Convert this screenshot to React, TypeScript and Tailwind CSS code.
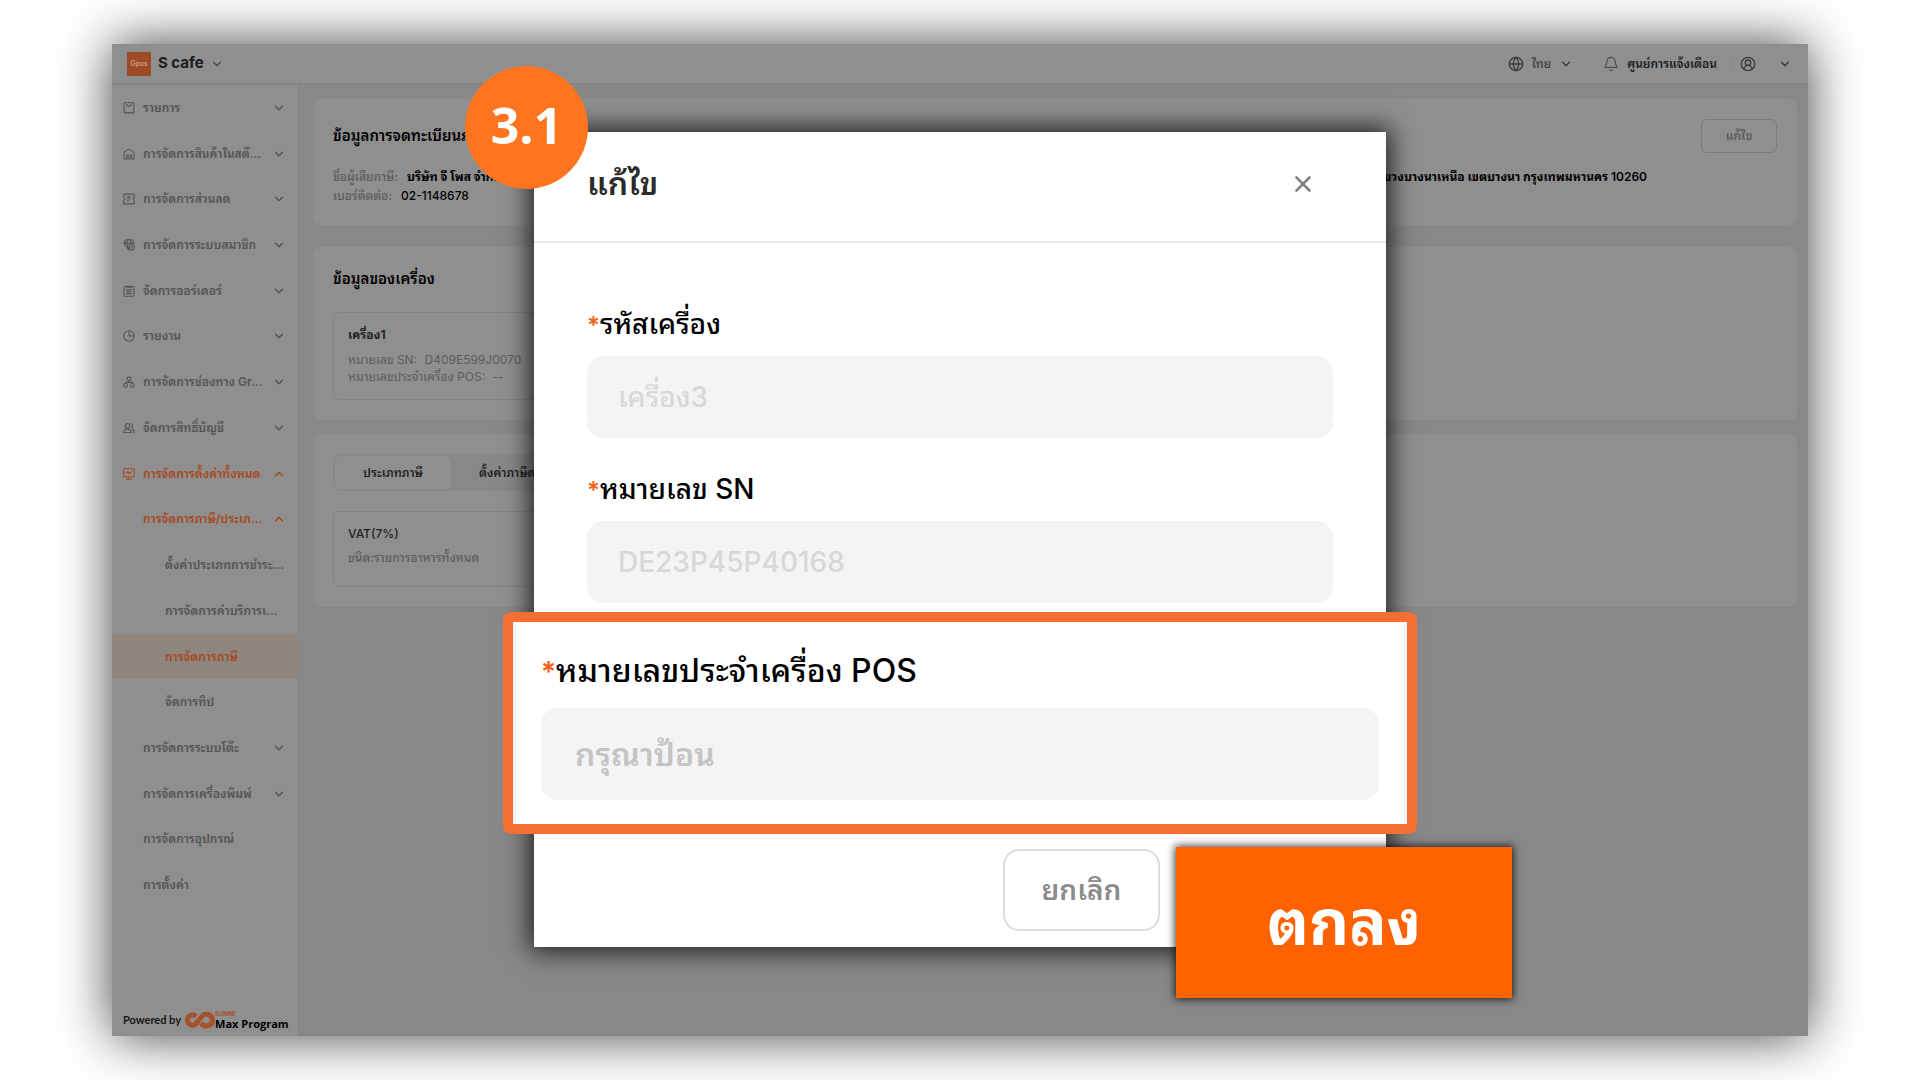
import { ReactNode } from 'react';
import { Bell, ChevronDown, ChevronUp, CircleUserRound, Globe, X } from 'lucide-react';
import { clsx } from 'clsx';

interface NavItem {
  title: string;
  icon?: ReactNode;
  level: 1 | 2 | 3;
  arrow?: 'up' | 'down';
  active?: boolean;
  current?: boolean;
}

function NavIcon({ children }: { children: ReactNode }) {
  return (
    <svg
      viewBox="0 0 16 16"
      className="w-3 h-3 shrink-0"
      fill="none"
      stroke="currentColor"
      strokeWidth="1.4"
      strokeLinejoin="round"
    >
      {children}
    </svg>
  );
}

const navigation: NavItem[] = [
  {
    title: 'รายการ',
    level: 1,
    arrow: 'down',
    icon: <NavIcon><rect x="1.5" y="1" width="13" height="13.5" rx="1" /><path d="M5 2.5a3 3 0 0 0 6 0" /></NavIcon>,
  },
  {
    title: 'การจัดการสินค้าในสต๊...',
    level: 1,
    arrow: 'down',
    icon: <NavIcon><path d="M1.5 14.5V5.5L8 1.5l6.5 4v9zM4 12h8M4.5 9.5h2.5v2M9 9.5h2.5v2" /></NavIcon>,
  },
  {
    title: 'การจัดการส่วนลด',
    level: 1,
    arrow: 'down',
    icon: <NavIcon><path d="M1 1.5h14v4l-1.5 2.5 1.5 2.5v4H1v-4L2.5 8 1 5.5zM5.5 5.5h5M5.5 8h4M5.5 10.5h2.5" /></NavIcon>,
  },
  {
    title: 'การจัดการระบบสมาชิก',
    level: 1,
    arrow: 'down',
    icon: <NavIcon><path d="M8 15L1 5.5L4 1h8l3 4.5M1 5.5h14M5 5.5L8 15M5 5.5L6.5 1M10.5 5.5L9.5 1" /><circle cx="11.5" cy="11" r="3.5" /><path d="M10 11l1 1 2-2" /></NavIcon>,
  },
  {
    title: 'จัดการออร์เดอร์',
    level: 1,
    arrow: 'down',
    icon: <NavIcon><rect x="1.5" y="2" width="13" height="13" rx="1" /><path d="M5 1v2h6V1M4.5 6.5h7M4.5 9h7M4.5 11.5h7" /></NavIcon>,
  },
  {
    title: 'รายงาน',
    level: 1,
    arrow: 'down',
    icon: <NavIcon><circle cx="8" cy="8" r="7" /><path d="M8 1v7h7" /></NavIcon>,
  },
  {
    title: 'การจัดการช่องทาง Gr...',
    level: 1,
    arrow: 'down',
    icon: <NavIcon><circle cx="8" cy="3.5" r="2.5" /><circle cx="3.5" cy="12.5" r="2.5" /><circle cx="12.5" cy="12.5" r="2.5" /><path d="M8 6v2.5M3.5 10V8.5h9V10" /></NavIcon>,
  },
  {
    title: 'จัดการสิทธิ์บัญชี',
    level: 1,
    arrow: 'down',
    icon: <NavIcon><circle cx="6" cy="5" r="3" /><path d="M1 14c0-6 10-6 10 0zM10 2.5a2.5 2.5 0 0 1 1 5M12 9.5c2 .5 3 2 3 4.5h-2" /></NavIcon>,
  },
  {
    title: 'การจัดการตั้งค่าทั้งหมด',
    level: 1,
    arrow: 'up',
    active: true,
    icon: <NavIcon><rect x="1" y="1" width="14" height="11" rx="1" /><path d="M4 7l2.5-2 2 2.5L12 4.5M4 15h8M8 12v3" /></NavIcon>,
  },
  { title: 'การจัดการภาษี/ประเภ...', level: 2, arrow: 'up', active: true },
  { title: 'ตั้งค่าประเภทการชำระ...', level: 3 },
  { title: 'การจัดการค่าบริการเ...', level: 3 },
  { title: 'การจัดการภาษี', level: 3, active: true, current: true },
  { title: 'จัดการทิป', level: 3 },
  { title: 'การจัดการระบบโต๊ะ', level: 2, arrow: 'down' },
  { title: 'การจัดการเครื่องพิมพ์', level: 2, arrow: 'down' },
  { title: 'การจัดการอุปกรณ์', level: 2 },
  { title: 'การตั้งค่า', level: 2 },
];

function Header() {
  return (
    <header className="flex items-center h-[41px] border-b-2 border-[#848484] pl-[15px] pr-4">
      <div className="w-6 h-6 bg-[#9c4b25] text-[#d9b8a8] text-[7px] leading-6 text-center">Gpos</div>
      <button className="flex items-center gap-1.5 ml-[7px] text-[15px] font-bold text-[#1c1c1c]">
        S cafe
        <ChevronDown className="w-3.5 h-3.5 text-[#4d4d4d]" strokeWidth={2.5} />
      </button>
      <div className="flex items-center ml-auto text-xs">
        <button className="flex items-center font-medium text-[#3c3c3c]">
          <Globe className="w-4 h-4 mr-2" />
          ไทย
          <ChevronDown className="w-3.5 h-3.5 ml-2" strokeWidth={2.5} />
        </button>
        <button className="flex items-center ml-[30px] font-semibold text-[#1c1c1c]">
          <Bell className="w-4 h-4 mr-2 text-[#4d4d4d]" strokeWidth={1.75} />
          ศูนย์การแจ้งเตือน
        </button>
        <span className="w-px h-4 ml-3.5 mr-2 bg-[#858585]" />
        <button className="flex items-center gap-[22px] text-[#3c3c3c]" aria-label="บัญชี">
          <CircleUserRound className="w-4 h-4" />
          <ChevronDown className="w-3.5 h-3.5" strokeWidth={2.5} />
        </button>
      </div>
    </header>
  );
}

function Sidebar() {
  return (
    <aside className="flex flex-col w-[187px] shrink-0 border-r border-[#858585]">
      <nav className="flex-1 grid auto-rows-fr">
        {navigation.map((item, index) => (
          <a
            key={index}
            href="#"
            className={clsx(
              'flex items-center pr-3 text-xs font-semibold whitespace-nowrap',
              item.level === 1 && 'pl-[11px] gap-2',
              item.level === 2 && 'pl-[31px]',
              item.level === 3 && 'pl-[53px]',
              item.active ? 'text-[#a8481c]' : 'text-[#545454]',
              item.current && 'bg-[#8f857f]'
            )}
          >
            {item.icon}
            <span>{item.title}</span>
            {item.arrow === 'down' && <ChevronDown className="w-3.5 h-3.5 ml-auto shrink-0" strokeWidth={2.5} />}
            {item.arrow === 'up' && <ChevronUp className="w-3.5 h-3.5 ml-auto shrink-0" strokeWidth={2.5} />}
          </a>
        ))}
      </nav>
      <div className="flex items-end h-32 pl-[11px] pb-1.5">
        <span className="mb-0.5 mr-1 font-['Lato'] text-[11px] leading-4 font-bold text-[#161616]">Powered by</span>
        <svg viewBox="0 0 30 18" className="w-[30px] h-[18px] mb-px" fill="none" stroke="#a5512b" strokeWidth="5">
          <path d="M11 5.5C7 2 2.5 5 2.5 9S7 16 10.5 13L17 5.5C20 1.5 27.5 3 27.5 9S19.5 17 16 12" />
        </svg>
        <div className="flex flex-col">
          <span className="text-[6px] leading-[6px] font-bold text-[#a5512b]">SUNMI</span>
          <span className="font-['Open_Sans'] text-[11px] leading-[13px] font-bold text-black">Max Program</span>
        </div>
      </div>
    </aside>
  );
}

function Content() {
  return (
    <main className="flex-1 min-w-0 bg-[#888888] pl-3.5 pr-[11px] pt-3.5 text-xs text-[#5c5c5c]">
      <section className="h-[126px] rounded-lg bg-[#8f8f8f] px-5 pt-5">
        <div className="flex items-center justify-between">
          <h2 className="text-[15px] font-semibold text-black">ข้อมูลการจดทะเบียนภาษี</h2>
          <button className="w-[76px] h-[34px] rounded-md border border-[#7b7b7b] text-[#5c5c5c] font-semibold">แก้ไข</button>
        </div>
        <div className="flex justify-between mt-3.5 leading-[19px] font-medium">
          <div>
            <p>ชื่อผู้เสียภาษี: <span className="ml-1.5 font-bold text-black">บริษัท จี โพส จำกัด</span></p>
            <p>เบอร์ติดต่อ: <span className="ml-1.5 text-black">02-1148678</span></p>
          </div>
          <p className="mr-[130px] font-bold text-black">แขวงบางนาเหนือ เขตบางนา กรุงเทพมหานคร <span className="font-semibold">10260</span></p>
        </div>
      </section>

      <section className="mt-[22px] rounded-lg bg-[#8f8f8f] px-5 pt-[22px] pb-5">
        <h2 className="text-[15px] leading-5 font-semibold text-black">ข้อมูลของเครื่อง</h2>
        <div className="grid grid-cols-3 mt-[23px]">
          <div className="h-[88px] rounded-md border border-[#838383] px-3.5 pt-3">
            <h3 className="leading-5 font-bold text-[#222222]">เครื่อง1</h3>
            <p className="mt-1.5 leading-[17px]">หมายเลข SN: <span className="ml-1">D409E599J0070</span></p>
            <p className="leading-[17px]">หมายเลขประจำเครื่อง POS: <span className="ml-1">--</span></p>
          </div>
        </div>
      </section>

      <section className="mt-3.5 rounded-lg bg-[#8f8f8f] p-5">
        <div className="inline-flex h-[37px] rounded-md bg-[#888888] border-2 border-[#888888] font-semibold text-[#222222]">
          <button className="w-[116px] rounded-md bg-[#8f8f8f]">ประเภทภาษี</button>
          <button className="px-7">ตั้งค่าภาษีตามสินค้า</button>
        </div>
        <div className="grid grid-cols-3 mt-5">
          <div className="h-[76px] rounded-md border border-[#838383] px-3.5 pt-3">
            <h3 className="leading-5 font-medium text-[#222222]">VAT(7%)</h3>
            <p className="mt-1 leading-5 font-medium">ชนิด:รายการอาหารทั้งหมด</p>
          </div>
        </div>
      </section>
    </main>
  );
}

interface FieldProps {
  id: string;
  label: string;
  placeholder: string;
}

function Field({ id, label, placeholder }: FieldProps) {
  return (
    <div className="flex flex-col gap-3.5">
      <label htmlFor={id} className="h-9 text-[28px] leading-9 font-medium text-black">
        <span className="text-2xl leading-9 font-semibold text-[#f4621c]">*</span>{label}
      </label>
      <input
        id={id}
        disabled
        placeholder={placeholder}
        className="w-full h-[82px] rounded-2xl bg-[#f4f4f4] px-[31px] text-[28px] font-medium placeholder:text-[#d8d8d8]"
      />
    </div>
  );
}

function EditDialog() {
  return (
    <div role="dialog" className="relative w-full max-w-[852px] bg-white shadow-[0_0_24px_4px_rgba(0,0,0,0.8)]">
      <div className="flex items-center justify-between h-[111px] border-b-2 border-[#efebe8] pl-[53px] pr-[70px] pb-1.5">
        <h1 className="text-[32px] font-semibold text-[#2b2b2b]">แก้ไข</h1>
        <button aria-label="ปิด">
          <X className="w-[26px] h-[26px] text-[#858585]" strokeWidth={2.5} />
        </button>
      </div>

      <div className="flex flex-col gap-[33px] px-[53px] pt-[63px]">
        <Field id="code" label="รหัสเครื่อง" placeholder="เครื่อง3" />
        <Field id="sn" label="หมายเลข SN" placeholder="DE23P45P40168" />
      </div>

      {/* ช่องที่ต้องกรอก */}
      <div className="flex flex-col gap-[19px] mt-[9px] -mx-[31px] rounded-lg border-10 border-[#f56f32] bg-white px-7 pt-[31px] pb-6">
        <label htmlFor="pos" className="h-9 text-[32px] leading-9 font-medium text-black">
          <span className="text-[28px] leading-9 font-semibold text-[#f4621c]">*</span>หมายเลขประจำเครื่อง POS
        </label>
        <input
          id="pos"
          placeholder="กรุณาป้อน"
          className="w-full h-[92px] rounded-2xl bg-[#f4f4f4] px-[34px] text-[32px] font-semibold placeholder:text-[#c4c4c4]"
        />
      </div>

      <div className="flex items-start justify-end gap-4 h-[113px] pt-[13px] -mr-[126px]">
        <button className="w-[157px] h-[82px] mt-0.5 rounded-2xl border-2 border-[#dcdcdc] text-[28px] font-semibold text-[#8c8c8c]">ยกเลิก</button>
        <button className="w-[336px] h-[151px] bg-[#ff6200] text-[62px] font-bold text-white shadow-[0_0_8px_1px_rgba(0,0,0,0.8)]">ตกลง</button>
      </div>

      <div className="absolute -top-[66px] -left-[69px] w-[123px] h-[123px] rounded-full bg-[#ff751f] flex items-center justify-center pb-1 font-['Open_Sans'] text-[50px] font-bold text-white">
        3.1
      </div>
    </div>
  );
}

export default function App() {
  return (
    <div className="relative min-h-screen flex bg-white px-28 py-11 font-['Inter','Noto_Sans_Thai_Looped','Noto_Looped_Thai','Loma','Sarabun','Waree','Garuda','Noto_Sans_Thai',sans-serif]">
      <div className="flex-1 flex flex-col bg-[#8f8f8f] shadow-[0_0_50px_rgba(0,0,0,0.75)]">
        <Header />
        <div className="flex-1 flex">
          <Sidebar />
          <Content />
        </div>
      </div>

      <div className="absolute inset-0 flex items-start justify-center pt-[132px]">
        <EditDialog />
      </div>
    </div>
  );
}
